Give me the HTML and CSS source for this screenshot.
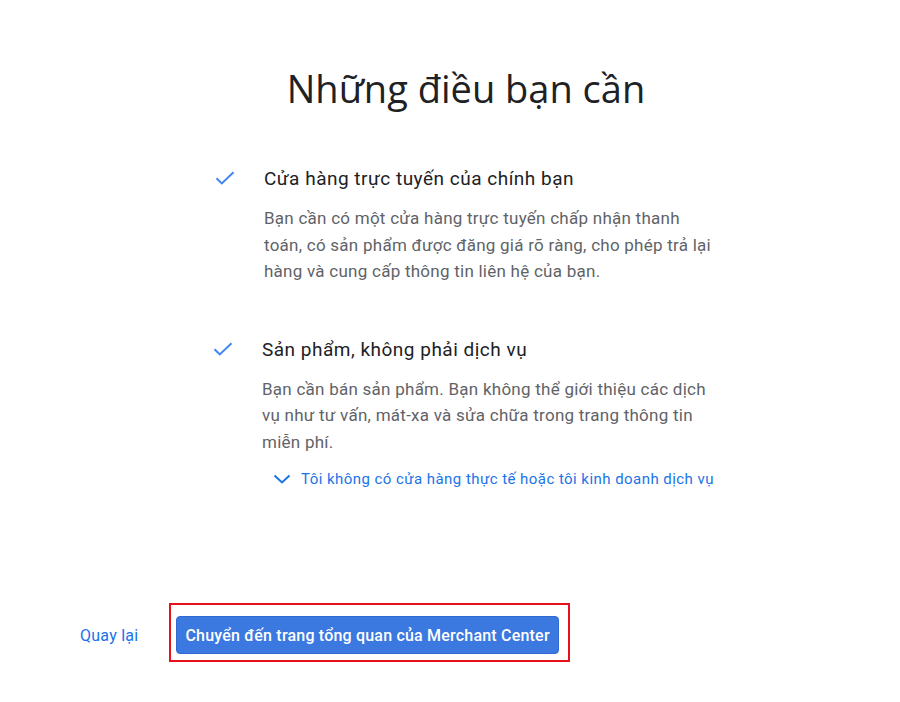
FILE: index.html
```html
<!DOCTYPE html>
<html lang="vi">
<head>
    <meta charset="UTF-8">
    <meta name="viewport" content="width=device-width, initial-scale=1.0">
    <title>Những điều bạn cần</title>
    <link rel="stylesheet" href="styles.css">
</head>
<body>

<div class="page">
    <h1 class="title">Những điều bạn cần</h1>

    <div class="list">
        <div class="item">
            <svg class="check" viewBox="0 0 20 14" width="20" height="14"><path d="M1.5 7.2 L6.8 12.4 L18.5 1.2" /></svg>
            <div class="item-body">
                <h2 class="item-title">Cửa hàng trực tuyến của chính bạn</h2>
                <p class="item-text">Bạn cần có một cửa hàng trực tuyến chấp nhận thanh toán, có sản phẩm được đăng giá rõ ràng, cho phép trả lại hàng và cung cấp thông tin liên hệ của bạn.</p>
            </div>
        </div>

        <div class="item item-second">
            <svg class="check" viewBox="0 0 20 14" width="20" height="14"><path d="M1.5 7.2 L6.8 12.4 L18.5 1.2" /></svg>
            <div class="item-body">
                <h2 class="item-title">Sản phẩm, không phải dịch vụ</h2>
                <p class="item-text">Bạn cần bán sản phẩm. Bạn không thể giới thiệu các dịch vụ như tư vấn, mát-xa và sửa chữa trong trang thông tin miễn phí.</p>
                <a href="#" class="expand">
                    <svg class="chevron" viewBox="0 0 18 10" width="18" height="10"><path d="M1.5 1.5 L9 8.5 L16.5 1.5" /></svg>
                    Tôi không có cửa hàng thực tế hoặc tôi kinh doanh dịch vụ
                </a>
            </div>
        </div>
    </div>
</div>

<div class="footer">
    <a href="#" class="back">Quay lại</a>
    <div class="highlight">
        <button class="button">Chuyển đến trang tổng quan của Merchant Center</button>
    </div>
</div>

</body>
</html>
```

FILE: styles.css
```css
body { font-family: Roboto, "Noto Sans", Arial, sans-serif; margin: 0; padding: 0; background: #fff; color: #202124; }
.page { padding: 60px 0 0 32px; }
.title { font-family: "Open Sans", Roboto, sans-serif; font-weight: 400; font-size: 38px; line-height: 56px; margin: 0; text-align: center; color: #202124; }
.list { width: 506px; margin: 50px auto 0; }
.item { display: flex; align-items: flex-start; }
.item-second { margin-top: 52px; margin-left: -2px; }
.check { flex: 0 0 auto; margin: 5px 29px 0 2px; fill: none; stroke: #4285f4; stroke-width: 2; }
.item-title { font-size: 19px; font-weight: 400; letter-spacing: 0.5px; line-height: 26px; margin: 0; color: #202124; }
.item-text { font-size: 17px; letter-spacing: 0.25px; line-height: 26.5px; margin: 13px 0 0; color: #5f6368; }
.expand { display: flex; align-items: center; margin: 13px 0 0 11px; font-size: 15px; letter-spacing: 0.45px; line-height: 22px; color: #1a73e8; text-decoration: none; }
.chevron { margin-right: 10px; fill: none; stroke: #1a73e8; stroke-width: 2; }
.footer { display: flex; align-items: center; margin-top: 113px; padding-left: 80px; }
.back { font-size: 16px; letter-spacing: 0.25px; color: #1a73e8; text-decoration: none; margin: 5px 31px 0 0; }
.highlight { border: 2px solid #e8101a; padding: 11px 9px 6px 5px; }
.button { font-family: Roboto, sans-serif; font-size: 16px; letter-spacing: 0.2px; font-weight: 500; color: #fff; background-color: #3b78e0; border: 1px solid #2f6ad0; border-radius: 4px; padding: 0 8px; height: 38px; cursor: pointer; }
```
